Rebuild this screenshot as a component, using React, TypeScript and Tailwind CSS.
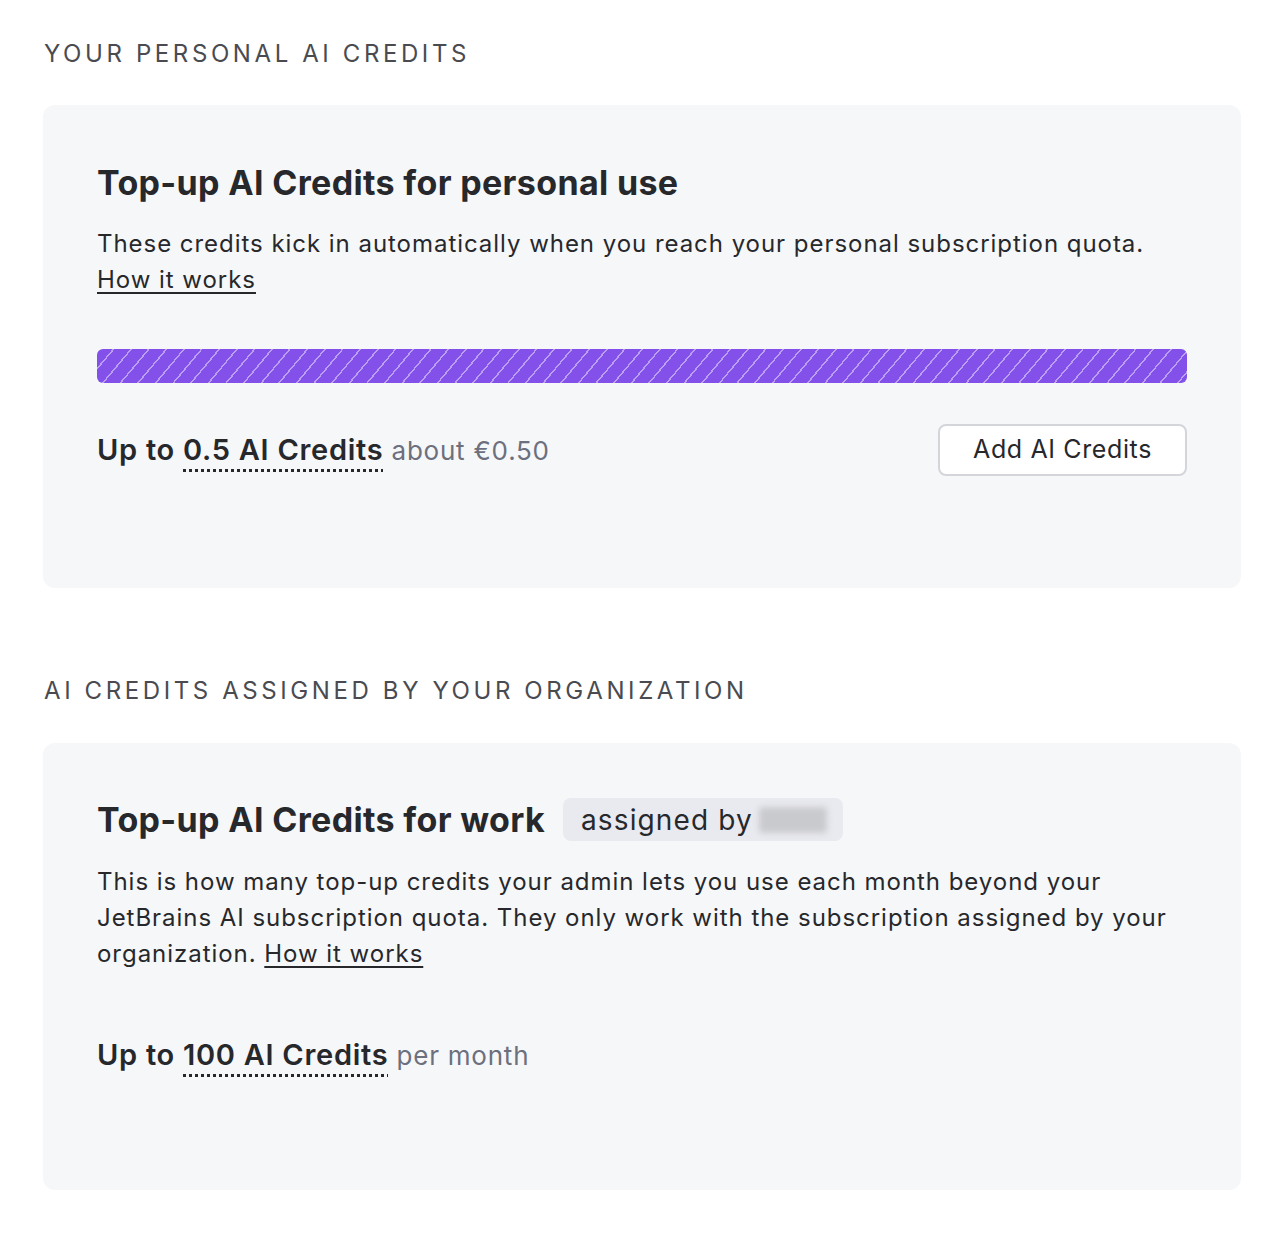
import React from "react";

const font = { fontFamily: "Inter, 'Noto Sans', sans-serif" };

function SectionTitle({ children }: { children: React.ReactNode }) {
  return (
    <h2 className="text-[24px] leading-none tracking-[0.15em] uppercase text-[#4a4b50] pl-[1px]">
      {children}
    </h2>
  );
}

function Amount({ value, suffix }: { value: string; suffix: string }) {
  return (
    <p className="text-[29px] leading-[40px] font-semibold text-[#27282c] tracking-[0.025em]">
      Up to{" "}
      <span className="underline decoration-dotted decoration-[3px] underline-offset-[9px] decoration-[#27282c]">
        {value}
      </span>{" "}
      <span className="font-normal text-[26px] tracking-[0.03em] text-[#6c707e]">{suffix}</span>
    </p>
  );
}

export default function App() {
  return (
    <div style={font} className="bg-white min-h-[1240px] px-[43px] pt-[42px] text-[#27282c]">
      <SectionTitle>Your personal AI credits</SectionTitle>

      <section className="mt-[39px] rounded-xl bg-[#f6f7f9] px-[54px] pt-[58px] pb-[112px]">
        <h3 className="text-[34px] leading-[40px] font-bold tracking-[0.01em]">
          Top-up AI Credits for personal use
        </h3>
        <p className="mt-[23px] text-[24px] leading-[36px] tracking-[0.04em]">
          These credits kick in automatically when you reach your personal subscription quota.
          <br />
          <a href="#" className="underline underline-offset-[4px] decoration-[2px]">
            How it works
          </a>
        </p>
        <div className="mt-[51px] h-[34px] rounded-md bg-[#8350ea] bg-[repeating-linear-gradient(130deg,transparent_0px,transparent_12px,rgba(255,255,255,0.45)_12px,rgba(255,255,255,0.45)_13.5px)]" />
        <div className="mt-[41px] flex items-center justify-between">
          <Amount value="0.5 AI Credits" suffix="about €0.50" />
          <button className="h-[52px] w-[249px] rounded-lg border-2 border-[#d3d5db] bg-white text-[25px] tracking-[0.025em] text-[#27282c]">
            Add AI Credits
          </button>
        </div>
      </section>

      <div className="mt-[91px]">
        <SectionTitle>AI credits assigned by your organization</SectionTitle>
      </div>

      <section className="mt-[40px] rounded-xl bg-[#f6f7f9] px-[54px] pt-[55px] pb-[114px]">
        <div className="flex items-center gap-[18px]">
          <h3 className="text-[34px] leading-[40px] font-bold tracking-[0.01em]">
            Top-up AI Credits for work
          </h3>
          <span className="flex items-center h-[43px] rounded-lg bg-[#e9eaef] pl-[18px] pr-[16px] text-[28px] tracking-[0.04em] text-[#27282c]">
            assigned by
            <span className="ml-[6px] inline-block h-[26px] w-[68px] rounded bg-[#c9cace] blur-[3px]" />
          </span>
        </div>
        <p className="mt-[23px] text-[24px] leading-[36px] tracking-[0.04em]">
          This is how many top-up credits your admin lets you use each month beyond your
          <br />
          JetBrains AI subscription quota. They only work with the subscription assigned by your
          organization.{" "}
          <a href="#" className="underline underline-offset-[4px] decoration-[2px]">
            How it works
          </a>
        </p>
        <div className="mt-[63px]">
          <Amount value="100 AI Credits" suffix="per month" />
        </div>
      </section>
    </div>
  );
}
